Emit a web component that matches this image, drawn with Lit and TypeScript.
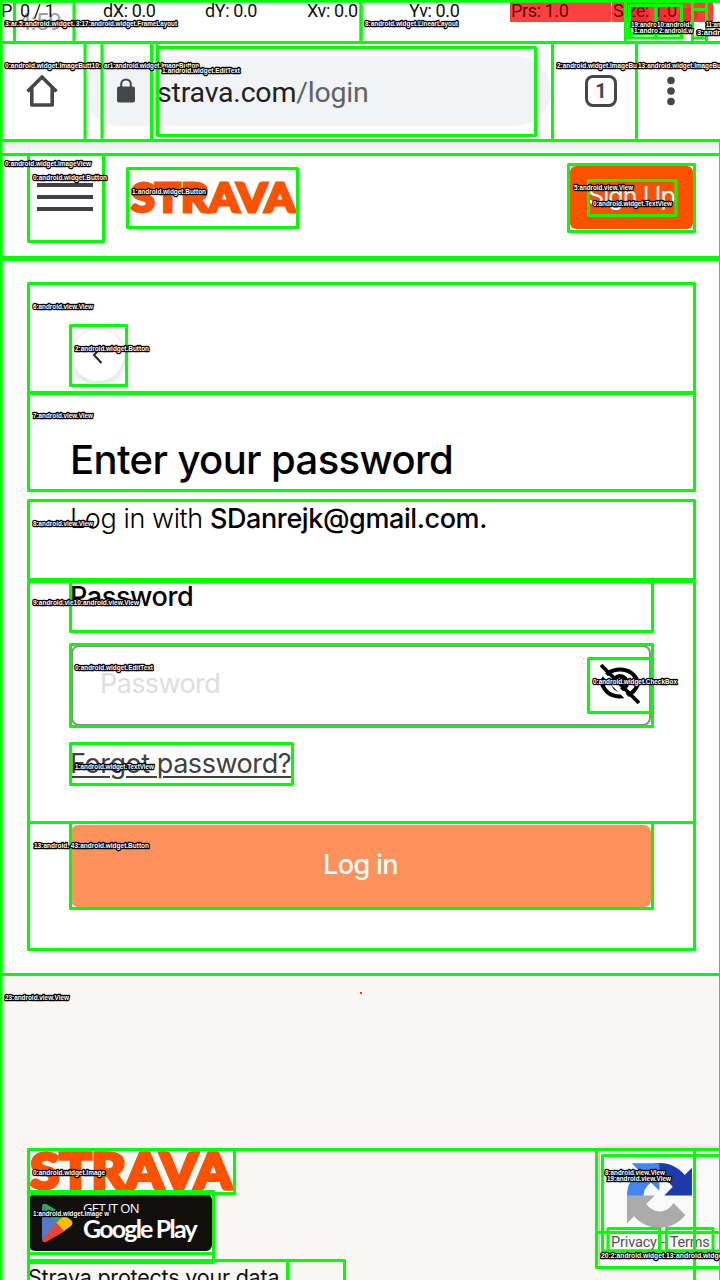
import { LitElement, html, svg, css } from "lit";
import { customElement, property } from "lit/decorators.js";

/** Bounds of each view: left, top, right, bottom. */
const BOUNDS: number[][] = [
  [1, 1, 722, 1283], [14.5, 1, 74, 42.5], [-2, 1, 361, 42.5], [361, 1, 722, 42.5],
  [1, 42.5, 85, 140.5], [102, 42.5, 151.5, 140.5], [-2, 42.5, 722, 140.5], [158, 47.5, 535.5, 135.5],
  [157, 43, 157, 135], [552.5, 42.5, 636.5, 140.5],
  [625.5, 1, 722, 42.5], [629.5, 5.5, 681.5, 33.5], [629.5, 5.5, 656, 38], [656, 5.5, 681.5, 38],
  [692.5, 1, 706.5, 42.5], [692.5, 9.5, 706.5, 38],
  [1, 154.5, 722, 257.5], [1, 259.5, 722, 974.5],
  [28.5, 154.5, 103.5, 241.5], [127.5, 168.5, 297.5, 227.5],
  [568.5, 164.5, 694.5, 231.5], [588.5, 180.5, 676, 215.5],
  [28.5, 283.5, 694.5, 392.5], [28.5, 393.5, 694.5, 490.5],
  [70.5, 325.5, 126.5, 385.5], [28.5, 500.5, 694.5, 579.5],
  [28.5, 582, 694.5, 949.5], [28.5, 822.5, 694.5, 949.5],
  [70.5, 582, 652.5, 631.5], [70.5, 644.5, 652.5, 726.5],
  [588.5, 658.5, 652, 712.5], [70.5, 743.5, 292.5, 784.5],
  [70.5, 822.5, 652.5, 908.5],
  [28.5, 1149.5, 722, 1283], [28.5, 1149.5, 234.5, 1193.5], [28.5, 1191.5, 213.5, 1253.5],
  [28.5, 1191.5, 213.5, 1262.5], [28.5, 1260.5, 344.5, 1283], [28.5, 1260.5, 287.5, 1283],
  [694.5, 1149.5, 722, 1283], [596.5, 1149.5, 722, 1267.5], [602.5, 1155.5, 722, 1251],
  [596.5, 1232.5, 722, 1267.5], [608, 1228.5, 659.5, 1251], [666.5, 1228.5, 713, 1251],
];

/** Captions: left, baseline, width, text. */
const TAGS: [number, number, number, string][] = [
  [5, 26, 74, "3:ar.5:android.widget.T"], [76, 26, 101, "3:17:android.widget.FrameLayout"],
  [365, 26, 93, "8:android.widget.LinearLayout"],
  [631, 27, 26, "19:andro"], [657, 27, 34, "10:android."], [706, 27, 20, "11:andr"],
  [634, 33, 24, "1:andro"], [659, 33, 34, "2:android.w"], [697, 35, 30, "3:androi"],
  [5, 68, 96, "0:android.widget.ImageButt10:"], [104, 68, 95, "ar1:android.widget.ImageButton"],
  [162, 73, 78, "1:android.widget.EditText"],
  [557, 68, 80, "2:android.widget.ImageBu"], [638, 68, 95, "13:android.widget.ImageButton"],
  [5, 166, 86, "0:android.widget.ImageView"], [33, 180, 74, "0:android.widget.Button"],
  [132, 194, 74, "1:android.widget.Button"], [574, 190, 59, "5:android.view.View"],
  [593, 206, 79, "0:android.widget.TextView"], [33, 309, 60, "6:android.view.View"],
  [75, 351, 74, "2:android.widget.Button"], [33, 418, 60, "7:android.view.View"],
  [33, 526, 60, "8:android.view.View"], [33, 605, 106, "9:android.vie10:android.view.View"],
  [75, 670, 78, "0:android.widget.EditText"], [593, 684, 84, "0:android.widget.CheckBox"],
  [75, 769, 79, "1:android.widget.TextView"], [34, 848, 115, "13:android. 43:android.widget.Button"],
  [5, 1000, 64, "23:android.view.View"], [33, 1175, 72, "0:android.widget.Image"],
  [33, 1216, 76, "1:android.widget.Image w"], [605, 1175, 60, "8:android.view.View"],
  [607, 1181, 64, "19:android.view.View"], [601, 1258, 65, "20:2:android.widget."],
  [666, 1258, 72, "13:android.widget.Tex"],
];

@customElement("strava-logo")
class StravaLogo extends LitElement {
  @property({ type: Number }) width = 166;
  @property({ type: Number }) height = 31;
  static styles = css`
    :host { display: block; }
    svg { display: block; overflow: visible; }
    .word { font: 900 40.5px Lato, sans-serif; fill: #fc5200; stroke: #fc5200; stroke-width: 2.8; }
  `;
  render() {
    return html`<svg width=${this.width} height=${this.height} viewBox="0 0 166 31" preserveAspectRatio="none">
      <text class="word" x="1" y="29.8" textLength="164" lengthAdjust="spacingAndGlyphs">STRAVA</text>
    </svg>`;
  }
}

@customElement("bounds-overlay")
class BoundsOverlay extends LitElement {
  static styles = css`
    :host { position: absolute; inset: 0; pointer-events: none; }
    svg { display: block; }
    rect { fill: none; stroke: #00ff00; stroke-width: 3; stroke-linejoin: round; }
    text {
      font: 700 7px "Liberation Sans", sans-serif; fill: #fff; stroke: #000;
      stroke-width: 2.6; stroke-linejoin: round; paint-order: stroke;
    }
  `;
  render() {
    return html`<svg width="720" height="1280" viewBox="0 0 720 1280">
      ${BOUNDS.map(([l, t, r, b]) => svg`<rect x=${l} y=${t} width=${Math.max(r - l, 0.01)} height=${b - t}></rect>`)}
      <rect x="720.5" y="140" width="3" height="1140"></rect>
      ${TAGS.map(([x, y, w, s]) => svg`<text x=${x} y=${y} textLength=${w} lengthAdjust="spacingAndGlyphs">${s}</text>`)}
      <circle cx="361" cy="993" r="1.1" fill="#e00000"></circle>
    </svg>`;
  }
}

@customElement("app-root")
export class AppRoot extends LitElement {
  static styles = css`
    :host {
      display: block; position: relative; width: 720px; height: 1280px; overflow: hidden;
      background: #fff; color: #000; font-family: Inter, sans-serif;
    }
    * { box-sizing: border-box; margin: 0; }
    svg { display: block; flex: none; }
    .page { display: flex; flex-direction: column; height: 1280px; }
    .status { height: 43px; flex: none; padding: 8px 0 0 18px; font: 24px/28px Roboto, sans-serif; color: #a0a0a0; letter-spacing: -0.8px; }
    .pointer {
      position: absolute; top: 0; left: 0; display: grid; grid-template-columns: repeat(7, 101px);
      column-gap: 1px; font: 18px/22px Roboto, sans-serif; letter-spacing: -.4px; color: #111; white-space: nowrap;
    }
    .pointer span { height: 22px; padding-left: 1px; }
    .pointer .hot { background: #ff4040; color: #5c0a0a; }
    .blobs { position: absolute; left: 630px; top: 8px; display: flex; gap: 4px; }
    .blobs i { width: 20px; height: 14px; border-radius: 8px; background: rgba(215, 0, 20, .28); }
    .toolbar { height: 98px; flex: none; display: flex; align-items: flex-start; padding: 13px 0 0 24px; }
    .toolbar .home { margin: 17px 24px 0 0; }
    .pill { width: 467px; height: 70px; border-radius: 35px; background: #f1f3f4; display: flex; align-items: center; padding-left: 32px; }
    .lock { margin-right: 21px; }
    .url { font: 28.5px/40px Roboto, sans-serif; letter-spacing: -.2px; color: #202124; white-space: nowrap; padding-top: 4px; }
    .url span { color: #5f6368; }
    .tab {
      width: 32px; height: 32px; border: 3.5px solid #44474a; border-radius: 8px; margin: 19px 0 0 34px;
      font: 700 20px/27px Roboto, sans-serif; text-align: center; color: #44474a;
    }
    .dots { margin: 19px 0 0 49px; }
    .shade { height: 13px; flex: none; background: linear-gradient(#ebebeb, #fafafa); }
    .header { height: 105px; flex: none; display: flex; padding: 0 27px 0 37px; }
    .menu { width: 56px; height: 28px; margin: 29px 37px 0 0; border-top: 4px solid #404044; border-bottom: 4px solid #404044; display: flex; align-items: center; }
    .menu i { width: 56px; height: 4px; background: #404044; }
    .header strava-logo { margin-top: 28px; }
    .signup { margin: 12px 0 0 auto; width: 123px; height: 63px; border-radius: 6px; background: #fc5200; color: #fff; font-size: 25px; line-height: 61px; text-align: center; letter-spacing: -.9px; }
    .main { height: 715px; flex: none; padding: 69px 69px 0 71px; }
    .back { width: 54px; height: 54px; border-radius: 50%; border: 1px solid #e6e6e6; box-shadow: 0 3px 7px rgba(0, 0, 0, .14); display: grid; place-items: center; }
    h1 { margin: 54px 0 0 -1px; font-size: 40px; line-height: 48px; font-weight: 500; letter-spacing: -.6px; white-space: nowrap; }
    .who { margin: 17px 0 0 -1px; font-size: 27px; line-height: 36px; font-weight: 300; white-space: nowrap; letter-spacing: -.4px; }
    .who b { font-weight: 500; }
    label { display: block; margin: 42px 0 0 -1px; font-size: 27px; line-height: 36px; font-weight: 500; letter-spacing: -.4px; }
    .field { margin-top: 30px; height: 81px; border: 2px solid #8d8a8e; border-radius: 8px; display: flex; align-items: center; justify-content: space-between; padding: 0 8px 4px 27px; font-size: 27px; letter-spacing: -.6px; color: #dedede; }
    .forgot { margin: 20px 0 0 -1px; width: max-content; font-size: 27px; line-height: 36px; color: #404040; text-decoration: underline; text-decoration-thickness: 2px; text-underline-offset: 3px; letter-spacing: -.45px; }
    .login { margin-top: 43px; height: 82px; border-radius: 7px; background: #fd915b; color: #fff; text-align: center; font-size: 27px; line-height: 79px; font-weight: 500; letter-spacing: -.6px; padding-right: 1px; }
    .footer { flex: 1; background: #f9f7f4; display: flex; justify-content: space-between; padding: 178px 0 0 29px; }
    .footer strava-logo { width: 204px; margin-bottom: 4px; }
    .play { width: 183px; height: 57px; border-radius: 6px; background: #100f0d; display: flex; align-items: center; padding-left: 12px; gap: 10px; color: #fff; }
    .play small { display: block; font: 13px/14px "Open Sans", sans-serif; letter-spacing: -.6px; }
    .play strong { display: block; font: 700 25px/27px Lato, sans-serif; letter-spacing: -1.8px; white-space: nowrap; padding-bottom: 2px; }
    .data { margin: 13px 0 0 -1px; font-size: 21.5px; line-height: 26px; white-space: nowrap; letter-spacing: -.2px; color: #111; }
    .captcha { width: 120px; height: 116px; background: #f9f9f9; box-shadow: 0 0 6px #888; padding: 13px 0 0 11px; margin-top: -2px; }
    .captcha svg { margin-left: 16px; }
    .legal { font: 14.5px/18px Roboto, sans-serif; color: #555; white-space: nowrap; letter-spacing: -.15px; margin-top: 6px; display: flex; gap: 4.5px; }
  `;

  render() {
    return html`
      <div class="page">
        <div class="status">4:59</div>
        <div class="toolbar">
          <svg class="home" width="36" height="36" viewBox="0 0 36 36" fill="none" stroke="#44474a" stroke-width="3.6" stroke-linejoin="round">
            <path d="M3.5 18.5 18 4 32.5 18.5M7.8 15.5V32H28.2V15.5"></path>
          </svg>
          <div class="pill">
            <svg class="lock" width="20" height="26" viewBox="0 0 20 26">
              <path d="M5.2 10V6.2a4.8 4.8 0 0 1 9.6 0V10" fill="none" stroke="#44474a" stroke-width="2"></path>
              <rect x="1" y="8.5" width="18" height="16" rx="2" fill="#44474a"></rect>
            </svg>
            <div class="url">strava.com<span>/login</span></div>
          </div>
          <div class="tab">1</div>
          <svg class="dots" width="10" height="32" viewBox="0 0 10 32" fill="#44474a">
            <circle cx="5" cy="5.5" r="3.8"></circle><circle cx="5" cy="16" r="3.8"></circle><circle cx="5" cy="26.5" r="3.8"></circle>
          </svg>
        </div>
        <div class="shade"></div>
        <div class="header">
          <div class="menu"><i></i></div>
          <strava-logo></strava-logo>
          <div class="signup">Sign Up</div>
        </div>
        <div class="main">
          <div class="back">
            <svg width="14" height="22" viewBox="0 0 14 22" fill="none" stroke="#222" stroke-width="2"><path d="M10.5 3 3 11l7.5 8"></path></svg>
          </div>
          <h1>Enter your password</h1>
          <div class="who">Log in with <b>SDanrejk@gmail.com.</b></div>
          <label>Password</label>
          <div class="field">
            <span>Password</span>
            <svg width="42" height="42" viewBox="0 0 42 42" fill="none" stroke="#000" stroke-width="4">
              <path d="M2.5 20C6 11 13 6.5 21 6.5S36 11 39.5 20C36 29 29 33.5 21 33.5S6 29 2.5 20Z"></path>
              <circle cx="21" cy="20" r="7"></circle>
              <path d="M-2 5 36 43" stroke="#fff"></path>
              <path d="M2 2 40 40" stroke-width="3.8"></path>
            </svg>
          </div>
          <div class="forgot">Forgot password?</div>
          <div class="login">Log in</div>
        </div>
        <div class="footer">
          <div>
            <strava-logo width="204" height="38"></strava-logo>
            <div class="play">
              <svg width="32" height="40" viewBox="0 0 32 40">
                <path d="M1 3v34l16-17Z" fill="#5579c9"></path>
                <path d="M1 3Q2-.5 6 1.5L24 12 16 20Z" fill="#34a853"></path>
                <path d="M1 37q1 3.5 5 1.5L24 28 16 19Z" fill="#ea4335"></path>
                <path d="M23 12 30 17q3 3 0 6l-7 5-7.5-8Z" fill="#fbbc04"></path>
              </svg>
              <div><small>GET IT ON</small><strong>Google Play</strong></div>
            </div>
            <div class="data">Strava protects your data.</div>
          </div>
          <div class="captcha">
            <svg width="65" height="65" viewBox="0 0 64 64">
              <path fill="#1c3aa9" d="M64 31.955l-.033-1.370V4.687l-7.160 7.160C50.948 4.674 42.033.093 32.050.093c-10.400 0-19.622 4.960-25.458 12.640l11.736 11.860a15.550 15.550 0 0 1 4.754-5.334c2.050-1.600 4.952-2.906 8.968-2.906.485 0 .860.057 1.135.163 4.976.393 9.288 3.140 11.828 7.124l-8.307 8.307L64 31.953"></path>
              <path fill="#4285f4" d="M31.862.094l-1.370.033H4.594l7.160 7.160C4.580 13.147 0 22.060 0 32.046c0 10.400 4.960 19.622 12.640 25.458L24.500 45.768a15.550 15.550 0 0 1-5.334-4.754c-1.600-2.050-2.906-4.952-2.906-8.968 0-.485.057-.860.163-1.135.393-4.976 3.140-9.288 7.124-11.828l8.307 8.307L31.860.095"></path>
              <path fill="#ababab" d="M.001 32.045l.033 1.370v25.898l7.160-7.160c5.860 7.173 14.774 11.754 24.760 11.754 10.400 0 19.622-4.960 25.458-12.640l-11.736-11.860a15.550 15.550 0 0 1-4.754 5.334c-2.050 1.600-4.952 2.906-8.968 2.906-.485 0-.860-.057-1.135-.163-4.976-.393-9.288-3.140-11.828-7.124l8.307-8.307c-10.522.040-22.400.066-27.295-.005"></path>
            </svg>
            <div class="legal"><span>Privacy</span><span>-</span><span>Terms</span></div>
          </div>
        </div>
      </div>
      <div class="pointer">
        <span>P: 0 / 1</span><span>dX: 0.0</span><span>dY: 0.0</span><span>Xv: 0.0</span><span>Yv: 0.0</span>
        <span class="hot">Prs: 1.0</span><span class="hot">Size: 1.0</span>
      </div>
      <div class="blobs"><i></i><i></i><i></i></div>
      <bounds-overlay></bounds-overlay>
    `;
  }
}
